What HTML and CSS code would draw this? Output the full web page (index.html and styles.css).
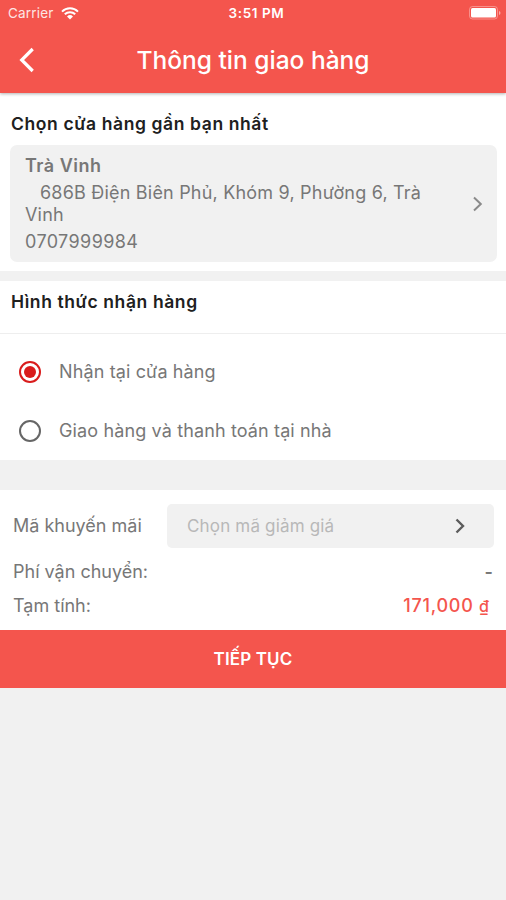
FILE: index.html
```html
<!DOCTYPE html>
<html lang="vi">
<head>
<meta charset="utf-8">
<title>Thông tin giao hàng</title>
<link rel="stylesheet" href="styles.css">
</head>
<body>
<header class="header">
  <div class="status">
    <div class="status-left"><span class="carrier">Carrier</span>
      <svg class="wifi" viewBox="0 0 18 13" width="18" height="13"><path d="M1 4.600a11.400 11.400 0 0 1 16 0M3.800 7.300a7.400 7.400 0 0 1 10.400 0" fill="none" stroke="#fff" stroke-width="2"/><path d="M6 9.500a4.300 4.300 0 0 1 6 0L9 12.600z" fill="#fff"/></svg>
    </div>
    <span class="time">3:51 PM</span>
    <svg class="battery" viewBox="0 0 32 14" width="32" height="14"><rect x=".5" y=".5" width="28" height="12.500" rx="3" fill="none" stroke="#fff" stroke-opacity=".35"/><rect x="2" y="2" width="25" height="9.500" rx="1.500" fill="#fff"/><path d="M30 5v4q1.500-.6 1.500-2t-1.500-2z" fill="#fff" fill-opacity=".5"/></svg>
  </div>
  <div class="nav">
    <svg class="back" viewBox="0 0 16 26" width="16" height="26"><path d="M13.700 2L2.700 13l11 11" fill="none" stroke="#fff" stroke-width="3.200"/></svg>
    <h1 class="title">Thông tin giao hàng</h1>
  </div>
</header>
<main>
  <section class="store">
    <h2 class="heading store-heading">Chọn cửa hàng gần bạn nhất</h2>
    <div class="card">
      <div class="card-text">
        <div class="store-name">Trà Vinh</div>
        <div class="address">686B Điện Biên Phủ, Khóm 9, Phường 6, Trà<br>Vinh</div>
        <div class="phone">0707999984</div>
      </div>
      <svg class="chevron" viewBox="0 0 12 18" width="12" height="18"><path d="M2 2.500L8.800 9 2 15.500" fill="none" stroke="#8a8a8a" stroke-width="2"/></svg>
    </div>
  </section>
  <section class="delivery">
    <h2 class="heading delivery-heading">Hình thức nhận hàng</h2>
    <div class="option"><span class="radio radio-on"></span><span>Nhận tại cửa hàng</span></div>
    <div class="option"><span class="radio"></span><span>Giao hàng và thanh toán tại nhà</span></div>
  </section>
  <section class="summary">
    <div class="promo">
      <span class="label">Mã khuyến mãi</span>
      <div class="promo-field"><span class="placeholder">Chọn mã giảm giá</span>
        <svg viewBox="0 0 12 18" width="12" height="18"><path d="M2.500 2.500L9 9l-6.500 6.500" fill="none" stroke="#5c5c5c" stroke-width="2.400"/></svg>
      </div>
    </div>
    <div class="row shipping"><span class="label">Phí vận chuyển:</span><span class="dash">-</span></div>
    <div class="row"><span class="label">Tạm tính:</span><span class="price">171,000 <span class="dong">₫</span></span></div>
  </section>
  <button class="continue">TIẾP TỤC</button>
</main>
</body>
</html>
```
FILE: styles.css
```css
* { box-sizing: border-box; }
body {
  margin: 0;
  min-height: 900px;
  background: #f1f1f1;
  color: #777;
  font: 18px/22px Inter, "Liberation Sans", sans-serif;
  white-space: nowrap;
}
h1, h2 { margin: 0; }
svg { display: block; flex: none; }
.header {
  position: relative;
  height: 93px;
  background: #f4554d;
  color: #fff;
  box-shadow: 0 1px 3px rgba(0, 0, 0, .3);
}
.status {
  display: grid;
  grid-template-columns: 1fr auto 1fr;
  align-items: center;
  height: 26px;
  padding: 0 5px 0 8px;
  font-size: 13.5px;
}
.status-left { display: flex; align-items: center; gap: 7px; }
.carrier { opacity: .85; letter-spacing: .2px; }
.time { font-weight: 600; letter-spacing: .6px; padding-left: 4px; }
.battery { justify-self: end; }
.nav {
  display: grid;
  grid-template-columns: 40px 1fr 40px;
  align-items: center;
  height: 67px;
}
.back { margin-left: 19px; }
.title {
  text-align: center;
  font-size: 24.5px;
  font-weight: 500;
  line-height: 32px;
}
.store { height: 178px; padding: 19px 9px 0 10px; background: #fff; }
.heading { color: #202020; font-size: 17.5px; font-weight: 600; line-height: 24px; letter-spacing: .6px; }
.store-heading { padding-left: 1px; }
.card {
  display: flex;
  justify-content: space-between;
  align-items: center;
  height: 117px;
  margin-top: 9px;
  padding: 0 13px 0 15px;
  border-radius: 7px;
  background: #f1f1f1;
}
.card-text { letter-spacing: .2px; }
.store-name { margin-bottom: 5px; font-weight: 600; letter-spacing: .5px; }
.address { text-indent: 15px; }
.phone { margin-top: 5px; letter-spacing: .4px; }
.delivery {
  height: 179px;
  margin-top: 10px;
  background: #fff;
}
.delivery-heading {
  height: 53px;
  padding: 9px 11px 0;
  border-bottom: 1px solid #eee;
}
.option { display: flex; align-items: center; gap: 18px; height: 59px; padding-left: 19px; letter-spacing: .13px; }
.delivery-heading + .option { margin-top: 8px; }
.radio {
  display: grid;
  place-items: center;
  width: 22px;
  height: 22px;
  border: 2px solid #666;
  border-radius: 50%;
}
.radio-on { border-color: #d91c1c; }
.radio-on::after { content: ""; width: 12px; height: 12px; border-radius: 50%; background: #d91c1c; }
.summary { height: 140px; margin-top: 30px; padding: 14px 12px 0 13px; background: #fff; }
.promo { display: flex; justify-content: space-between; align-items: center; height: 44px; }
.promo-field {
  display: flex;
  justify-content: space-between;
  align-items: center;
  width: 327px;
  height: 44px;
  padding: 0 28px 0 20px;
  border-radius: 5px;
  background: #f1f1f1;
  color: #b8b8b8;
  font-size: 17px;
}
.placeholder { letter-spacing: .17px; }
.row { display: flex; justify-content: space-between; align-items: center; height: 34px; padding-right: 5px; }
.shipping { margin-top: 7px; padding-right: 1px; }
.dash { font-weight: 600; }
.price { color: #f4554d; font-weight: 500; letter-spacing: .75px; }
.dong { font-size: 16px; letter-spacing: 0; }
.continue {
  display: block;
  width: 100%;
  height: 58px;
  border: 0;
  background: #f4554d;
  color: #fff;
  font: 600 17px/22px Inter, "Liberation Sans", sans-serif;
  letter-spacing: .15px;
}
```
